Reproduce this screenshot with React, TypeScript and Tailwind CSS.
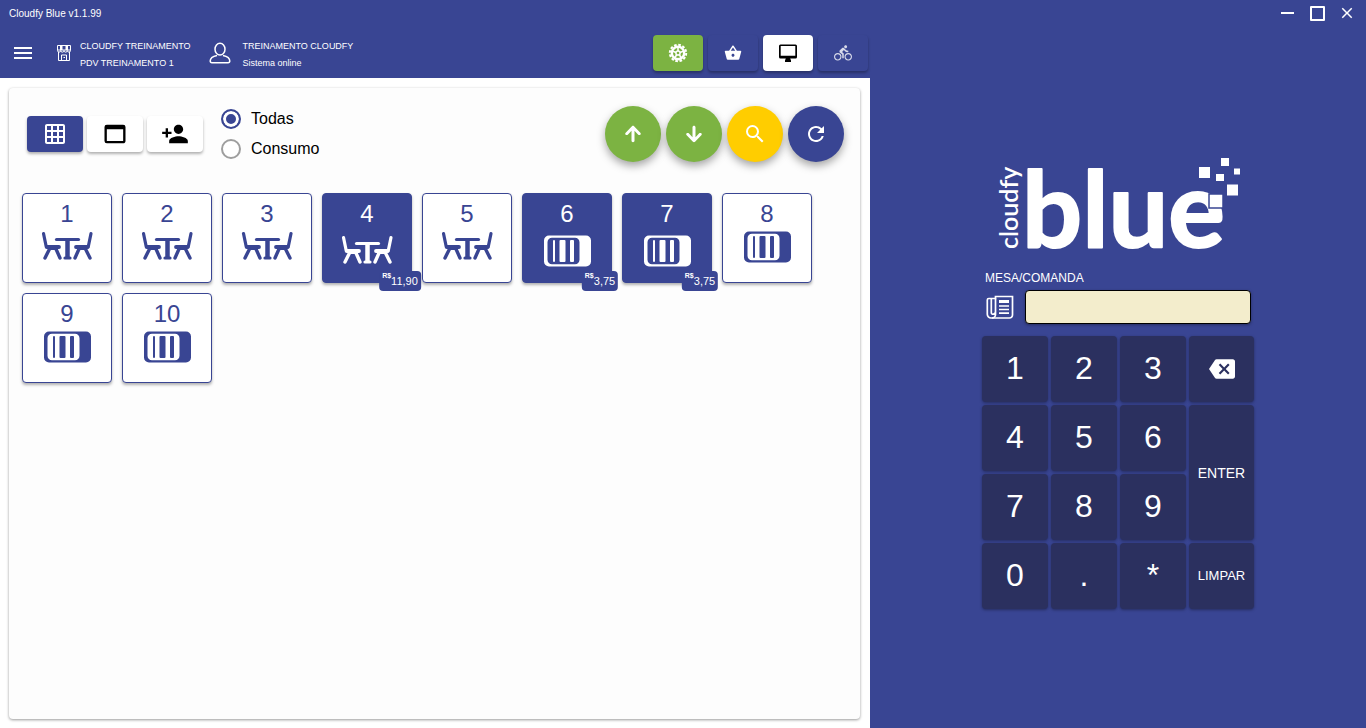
import { useState, type ReactNode } from "react";
import {
  MdBackspace,
  MdClose,
  MdDirectionsBike,
  MdGridOn,
  MdMenu,
  MdPersonAdd,
  MdRefresh,
  MdSearch,
  MdShoppingBasket,
  MdWebAsset,
} from "react-icons/md";
import { IoMdArrowRoundDown, IoMdArrowRoundUp } from "react-icons/io";

type Kind = "table" | "card";

interface Spot {
  id: number;
  kind: Kind;
  total?: string;
}

const spots: Spot[] = [
  { id: 1, kind: "table" },
  { id: 2, kind: "table" },
  { id: 3, kind: "table" },
  { id: 4, kind: "table", total: "11,90" },
  { id: 5, kind: "table" },
  { id: 6, kind: "card", total: "3,75" },
  { id: 7, kind: "card", total: "3,75" },
  { id: 8, kind: "card" },
  { id: 9, kind: "card" },
  { id: 10, kind: "card" },
];

function StoreIcon() {
  return (
    <svg viewBox="0 0 16 18" className="h-[18px] w-4" fill="none" stroke="currentColor" aria-hidden="true">
      <path d="M1.500 1.500h13V6h-13z" />
      <path d="M4 1.500h2.500V6H4zM9.500 1.500H12V6H9.500z" fill="currentColor" stroke="none" />
      <path d="M1.500 5.500v1a1.500 1.500 0 0 0 3.200 0 1.600 1.600 0 0 0 3.300 0 1.600 1.600 0 0 0 3.300 0 1.500 1.500 0 0 0 3.200 0v-1" />
      <path d="M2.500 8v8.500h11V8M5.500 16.500V11h5v5.500M7.500 13.500h1.500" />
    </svg>
  );
}

function UserIcon() {
  return (
    <svg viewBox="0 0 22 22" className="size-[22px]" fill="none" stroke="currentColor" strokeWidth="1.500" aria-hidden="true">
      <ellipse cx="11" cy="7.200" rx="5" ry="5.900" />
      <path d="M8 13.400C4.200 14.200 1.200 15.500 1.200 19c0 1.200.6 1.700 1.800 1.700h16c1.200 0 1.800-.5 1.800-1.700 0-3.500-3-4.800-6.800-5.600" />
    </svg>
  );
}

function GearIcon() {
  return (
    <svg viewBox="0 0 20 20" className="size-5" fill="none" stroke="currentColor" aria-hidden="true">
      <circle cx="10" cy="10" r="8.200" strokeWidth="2" strokeDasharray="2.650 1.643" />
      <circle cx="10" cy="10" r="6.200" strokeWidth="2.400" />
      <circle cx="10" cy="10" r="2.100" strokeWidth="1.500" />
      <path d="M10 8V4.500M12 9.400l3.200-1.100M11.200 11.700l2 2.800M8.800 11.700l-2 2.800M8 9.400L4.800 8.300" strokeWidth="1.600" />
    </svg>
  );
}

function MonitorIcon() {
  return (
    <svg viewBox="0 0 20 20" className="size-5" aria-hidden="true">
      <path
        fill="currentColor"
        fillRule="evenodd"
        d="M2.500 1.500h15A1.500 1.500 0 0 1 19 3v11a1.500 1.500 0 0 1-1.500 1.500h-5.300l.8 2v1.500H7v-1.500l.8-2H2.500A1.500 1.500 0 0 1 1 14V3a1.500 1.500 0 0 1 1.500-1.500zM2.700 3v9.700h14.600V3z"
      />
    </svg>
  );
}

function TableIcon() {
  return (
    <svg viewBox="0 0 52 30" className="h-[30px] w-[52px]" fill="none" stroke="currentColor" strokeLinecap="round" strokeLinejoin="round" aria-hidden="true">
      <path d="M15.500 8.500h22" strokeWidth="3.200" />
      <path d="M26.500 9v17" strokeWidth="4.500" strokeLinecap="butt" />
      <path d="M24 27h5" strokeWidth="3.200" />
      <path d="M2.500 2.500l2.800 13.500M50 2.500l-2.800 13.500" strokeWidth="3.200" />
      <path d="M6 16h12M46.500 16H35" strokeWidth="3.800" />
      <path d="M8.500 18L4 27M15 18l4 9M44.500 18l4.500 9M38 18l-4 9" strokeWidth="3.400" />
      <path d="M8 18h7M45 18h-7" strokeWidth="2" />
    </svg>
  );
}

function CardIcon() {
  return (
    <svg viewBox="0 0 47 32" className="h-8 w-[47px]" aria-hidden="true">
      <path
        fill="currentColor"
        fillRule="evenodd"
        d="M5 .5h37a5 5 0 0 1 5 5v21a5 5 0 0 1-5 5H5a5 5 0 0 1-5-5v-21a5 5 0 0 1 5-5zM8 2.800a4.500 4.500 0 0 0-4.500 4.500v17.400A4.500 4.500 0 0 0 8 29.200h23a4.500 4.500 0 0 0 4.500-4.500V7.300A4.500 4.500 0 0 0 31 2.800z"
      />
      <rect x="9" y="5" width="2" height="22" rx="1" fill="currentColor" />
      <rect x="15.500" y="5" width="6" height="22" rx="1" fill="currentColor" />
      <rect x="26" y="5" width="4" height="22" rx="1" fill="currentColor" />
    </svg>
  );
}

function TicketIcon() {
  return (
    <svg viewBox="0 0 28 24" className="h-6 w-7" fill="none" stroke="currentColor" strokeWidth="1.700" aria-hidden="true">
      <path d="M9.500 1.500h17v18.500a3 3 0 0 1-3 3H5a3.700 3.700 0 0 1-3.700-3.700V5a1.500 1.500 0 0 1 1.500-1.500h6.700z" />
      <path d="M5.300 4v13.500a1.700 1.700 0 0 0 2.100 1.700 2.400 2.400 0 0 0 2.100-2.300V3.500M9.500 17v2.500A3.500 3.500 0 0 1 6 23" />
      <path d="M13 6.500h10" strokeWidth="3" />
      <path d="M13 11h10M13 14.500h10M13 18.200h10" />
    </svg>
  );
}

function Logo() {
  return (
    <svg viewBox="0 0 250 110" className="h-[110px] w-[250px] overflow-visible" fill="#fff" role="img" aria-label="cloudfy blue">
      <text x="0" y="0" transform="translate(25 93) rotate(-90)" fontSize="25" className="font-[Lato,sans-serif]" fontWeight="600">
        cloudfy
      </text>
      <text x="29" y="91" fontSize="106" className="font-[Lato,sans-serif]" fontWeight="700" stroke="#fff" strokeWidth="2" strokeLinejoin="round">
        blue
      </text>
      <path d="M216 38h14v14h-14z" stroke="#394593" strokeWidth="1.500" />
      <path d="M206 11h11v11h-11zM228 2h8v8h-8zM223 18h8v7h-8zM241 12.500h6v6h-6zM234 28.500h11v11h-11z" />
    </svg>
  );
}

function SpotTile({ spot }: { spot: Spot }) {
  const busy = spot.total !== undefined;
  return (
    <button
      type="button"
      className={`relative flex size-[90px] flex-col items-center rounded border border-[#394593] pt-2 shadow-[0_2px_3px_rgba(0,0,0,0.3)] ${
        busy ? "gap-[9px] bg-[#394593] text-white" : "gap-[5px] bg-white text-[#394593]"
      }`}
    >
      <span className="text-2xl leading-6">{spot.id}</span>
      <span>{spot.kind === "table" ? <TableIcon /> : <CardIcon />}</span>
      {busy && (
        <span className="absolute -bottom-[9px] left-[77px] flex h-5 -translate-x-1/2 rounded bg-[#394593] px-[3px] text-[11px] leading-5 text-white">
          <span className="text-[7px] leading-[10px] font-bold">R$</span>
          {spot.total}
        </span>
      )}
    </button>
  );
}

function BarButton({ label, tone, children }: { label: string; tone: string; children: ReactNode }) {
  return (
    <button
      type="button"
      aria-label={label}
      className={`flex h-9 items-center justify-center rounded shadow-[0_2px_3px_rgba(0,0,0,0.3)] ${tone}`}
    >
      {children}
    </button>
  );
}

function RoundButton({ label, tone, children }: { label: string; tone: string; children: ReactNode }) {
  return (
    <button
      type="button"
      aria-label={label}
      className={`flex size-14 items-center justify-center rounded-full text-2xl text-white shadow-[0_4px_8px_rgba(0,0,0,0.35)] ${tone}`}
    >
      {children}
    </button>
  );
}

function Choice({ label, checked, onPick }: { label: string; checked: boolean; onPick: () => void }) {
  return (
    <label className="flex items-center gap-2.5 text-base leading-5 text-black">
      <input
        type="radio"
        name="filter"
        checked={checked}
        onChange={onPick}
        className="size-5 appearance-none rounded-full border-2 border-[#9e9e9e] bg-white checked:border-[#394593] checked:bg-[#394593] checked:shadow-[inset_0_0_0_3px_#fff]"
      />
      {label}
    </label>
  );
}

const keyBase =
  "flex items-center justify-center rounded bg-[#2b305f] text-white shadow-[0_1px_3px_rgba(0,0,0,0.35)]";

function Key({ label, onPress }: { label: string; onPress: (k: string) => void }) {
  return (
    <button type="button" onClick={() => onPress(label)} className={`${keyBase} pb-0.5 text-[32px]`}>
      {label}
    </button>
  );
}

export default function App() {
  const [filter, setFilter] = useState("Todas");
  const [code, setCode] = useState("");
  const press = (k: string) => setCode((c) => c + k);

  return (
    <div className="flex min-h-screen flex-col bg-[#394593] font-['Liberation_Sans',Arial,sans-serif] text-white">
      <header className="flex h-7 items-center justify-between pr-2.5 pb-0.5 pl-[9px]">
        <h1 className="text-[10px]">Cloudfy Blue v1.1.99</h1>
        <div className="flex items-center gap-3">
          <button type="button" aria-label="Minimizar" className="flex size-[18px] items-center justify-center">
            <span className="h-0.5 w-[13px] bg-white" />
          </button>
          <button type="button" aria-label="Maximizar" className="flex size-[18px] items-center justify-center">
            <span className="size-[15px] rounded-[1px] border-2 border-white" />
          </button>
          <button type="button" aria-label="Fechar" className="flex size-[18px] items-center justify-center text-lg">
            <MdClose />
          </button>
        </div>
      </header>

      <div className="flex flex-1">
        <div className="flex flex-1 flex-col">
          <nav className="flex h-[50px] items-center pr-0.5 pl-[11px]">
            <button type="button" aria-label="Menu" className="text-2xl">
              <MdMenu />
            </button>
            <div className="ml-[21px] flex items-center gap-2">
              <StoreIcon />
              <p className="pt-1 text-[9px] leading-[17px]">
                CLOUDFY TREINAMENTO
                <br />
                PDV TREINAMENTO 1
              </p>
            </div>
            <div className="ml-[18px] flex items-center gap-3">
              <UserIcon />
              <p className="pt-1 text-[9px] leading-[17px]">
                TREINAMENTO CLOUDFY
                <br />
                Sistema online
              </p>
            </div>
            <div className="ml-auto grid grid-cols-[repeat(4,50px)] gap-[5px]">
              <BarButton label="Configurações" tone="bg-[#7cb342] text-white">
                <GearIcon />
              </BarButton>
              <BarButton label="Balcão" tone="bg-[#394593] text-lg text-white">
                <MdShoppingBasket />
              </BarButton>
              <BarButton label="Mesas" tone="bg-white text-black">
                <MonitorIcon />
              </BarButton>
              <BarButton label="Entregas" tone="bg-[#394593] text-lg text-[#d8daea]">
                <MdDirectionsBike />
              </BarButton>
            </div>
          </nav>

          <div className="flex flex-1 bg-white pt-2.5 pr-2.5 pb-[9px] pl-[9px]">
            <main className="flex flex-1 flex-col rounded bg-[#fdfdfd] shadow-[0_1px_3px_rgba(0,0,0,0.4)]">
              <div className="flex items-center pt-[18px] pr-4 pl-[18px]">
                <div className="grid grid-cols-[repeat(3,56px)] gap-1">
                  <BarButton label="Ver em grade" tone="bg-[#394593] text-2xl text-white">
                    <MdGridOn />
                  </BarButton>
                  <BarButton label="Ver em janela" tone="bg-white text-[28px] text-black">
                    <MdWebAsset />
                  </BarButton>
                  <BarButton label="Adicionar pessoa" tone="bg-white text-[28px] text-black">
                    <MdPersonAdd />
                  </BarButton>
                </div>
                <fieldset className="ml-[18px] flex flex-col gap-2.5">
                  <Choice label="Todas" checked={filter === "Todas"} onPick={() => setFilter("Todas")} />
                  <Choice label="Consumo" checked={filter === "Consumo"} onPick={() => setFilter("Consumo")} />
                </fieldset>
                <div className="ml-auto flex gap-[5px]">
                  <RoundButton label="Subir" tone="bg-[#7cb342]">
                    <IoMdArrowRoundUp />
                  </RoundButton>
                  <RoundButton label="Descer" tone="bg-[#7cb342]">
                    <IoMdArrowRoundDown />
                  </RoundButton>
                  <RoundButton label="Buscar" tone="bg-[#ffcd00]">
                    <MdSearch />
                  </RoundButton>
                  <RoundButton label="Atualizar" tone="bg-[#394593]">
                    <MdRefresh />
                  </RoundButton>
                </div>
              </div>
              <div className="flex flex-wrap gap-2.5 px-[13px] pt-[31px]">
                {spots.map((s) => (
                  <SpotTile key={s.id} spot={s} />
                ))}
              </div>
            </main>
          </div>
        </div>

        <aside className="flex w-[496px] flex-col items-center pt-32">
          <Logo />
          <div className="mt-1 w-[272px]">
            <label htmlFor="code" className="block pl-[3px] text-xs leading-4">
              MESA/COMANDA
            </label>
            <div className="mt-1 flex items-center gap-[11px] pr-[3px] pl-1">
              <TicketIcon />
              <input
                id="code"
                value={code}
                onChange={(e) => setCode(e.target.value)}
                className="h-[34px] min-w-0 flex-1 rounded border border-black bg-[#f3edcc] px-2 text-black shadow-[0_1px_3px_rgba(0,0,0,0.35)]"
              />
            </div>
            <div className="mt-3 grid auto-rows-[66px] grid-cols-[66px_66px_66px_65px] gap-[3px]">
              <Key label="1" onPress={press} />
              <Key label="2" onPress={press} />
              <Key label="3" onPress={press} />
              <button
                type="button"
                aria-label="Apagar"
                onClick={() => setCode((c) => c.slice(0, -1))}
                className={`${keyBase} text-[26px]`}
              >
                <MdBackspace />
              </button>
              <Key label="4" onPress={press} />
              <Key label="5" onPress={press} />
              <Key label="6" onPress={press} />
              <button type="button" className={`${keyBase} row-span-2 text-sm`}>
                ENTER
              </button>
              <Key label="7" onPress={press} />
              <Key label="8" onPress={press} />
              <Key label="9" onPress={press} />
              <Key label="0" onPress={press} />
              <Key label="." onPress={press} />
              <Key label="*" onPress={press} />
              <button type="button" onClick={() => setCode("")} className={`${keyBase} text-[13px]`}>
                LIMPAR
              </button>
            </div>
          </div>
        </aside>
      </div>
    </div>
  );
}
